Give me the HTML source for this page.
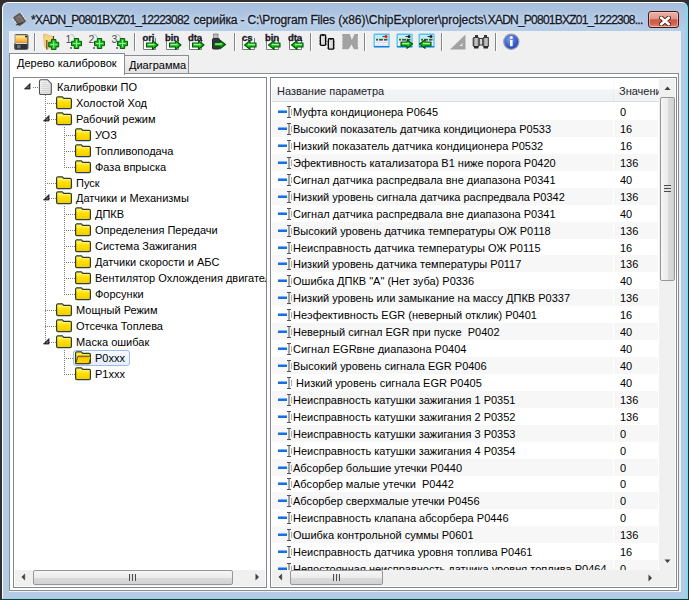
<!DOCTYPE html>
<html><head><meta charset="utf-8"><style>
*{box-sizing:border-box;margin:0;padding:0}
html,body{width:689px;height:600px;overflow:hidden;background:#303030}
body{position:relative;font-family:"Liberation Sans",sans-serif;font-size:11px;color:#000}
.a{position:absolute}
#frame{left:2px;top:2px;width:686px;height:597px;background:linear-gradient(#a6bedc 0px,#b6cde8 28px,#b4cbe6 40px,#b4cbe6 100%);border-radius:6px 6px 0 0;border:1px solid #fff;border-right:2px solid #7fdcf0;border-bottom:1px solid #7fdcf0}
#client{left:9px;top:31px;width:672px;height:561px;background:#f0f0f0}
.tt{top:13px;font-size:12px;color:#141828;-webkit-text-stroke:0.3px #141828;white-space:nowrap;text-shadow:0 0 6px #dfeaf6,0 0 3px #e8f0f8}
#close{left:648px;top:11px;width:31px;height:17px;border:1px solid #4a1812;border-radius:3px;background:linear-gradient(#eab2a8 0%,#e0988a 45%,#cc5a44 52%,#d06450 80%,#e0927c 100%);box-shadow:inset 0 0 0 1px rgba(255,220,210,0.5)}
.sep{top:33px;height:18px;width:2px;background:#84848c;border-right:1px solid #fff}
#tabpage{left:9px;top:73px;width:670px;height:518px;border:1px solid #898c95;background:#fff}
#tab1{left:9px;top:53px;width:116px;height:22px;background:#fff;border:1px solid #898c95;border-bottom:none;z-index:2}
#tab2{left:125px;top:55px;width:64px;height:18px;background:linear-gradient(#f2f2f2,#e4e4e4);border:1px solid #898c95;border-bottom:none;border-left:none}
.tabt{white-space:nowrap}
#tree{left:13px;top:77px;width:254px;height:511px;border:1px solid #828790;background:#fff;overflow:hidden}
#list{left:270px;top:77px;width:407px;height:511px;border:1px solid #828790;background:#fff;overflow:hidden}
.ti{position:absolute;height:16px;line-height:16px;white-space:nowrap}
.dh{height:1px;background-image:linear-gradient(90deg,#808080 50%,transparent 50%);background-size:2px 1px}
.dv{width:1px;background-image:linear-gradient(#808080 50%,transparent 50%);background-size:1px 2px}
.sel{border:1px solid #9dbde6;border-radius:3px;background:linear-gradient(#f5f9fe,#e4eefb)}
.hsb{height:16px;background:#f0f0f0}
.vsb{width:16px;background:#f0f0f0}
.corner{width:16px;height:16px;background:#f0f0f0}
.thumbh{height:15px;border:1px solid #979797;border-radius:2px;background:linear-gradient(#f6f6f6,#ececec 50%,#dcdcdc 51%,#d2d2d2)}
.thumbv{width:15px;border:1px solid #979797;border-radius:2px;background:linear-gradient(90deg,#f6f6f6,#ececec 50%,#dcdcdc 51%,#d2d2d2)}
.grip{position:absolute;left:50%;top:3px;width:7px;height:7px;margin-left:-4px;background:repeating-linear-gradient(90deg,#4a4a4a 0,#4a4a4a 1px,#e0e0e0 1px,#e0e0e0 3px)}
.gripv{position:absolute;top:50%;left:3px;width:7px;height:7px;margin-top:-4px;background:repeating-linear-gradient(#4a4a4a 0,#4a4a4a 1px,#e0e0e0 1px,#e0e0e0 3px)}
.hdr{background:linear-gradient(#ffffff 0%,#ffffff 45%,#f3f4f6 50%,#f1f2f4 100%);border-bottom:1px solid #dcdde0}
.hsep{top:0;width:1px;height:22px;background:linear-gradient(#fff,#e3e5e8)}
.ht{top:5px;white-space:nowrap;color:#1e1e2e}
.row{position:absolute;left:1px;height:17px;width:387px;white-space:nowrap}
.c1{position:absolute;left:0;top:0;width:341px;height:17px}
.c2{position:absolute;left:342px;top:0;width:44px;height:17px}
.g .c1,.g .c2{background:#f7f7f7}
.rt{position:absolute;left:21px;top:3px;line-height:13px}
.rv{position:absolute;left:348px;top:3px;line-height:13px}
</style></head><body>
<svg width="0" height="0" style="position:absolute"><defs><linearGradient id="gOr" x1="0" y1="0" x2="0" y2="1"><stop offset="0" stop-color="#fff4a0"/><stop offset="1" stop-color="#f59a1a"/></linearGradient><radialGradient id="gInfo" cx="0.4" cy="0.35" r="0.7"><stop offset="0" stop-color="#7a9cf0"/><stop offset="1" stop-color="#1a3ab0"/></radialGradient><linearGradient id="gFold" x1="0" y1="0" x2="0" y2="1"><stop offset="0" stop-color="#fff27a"/><stop offset="0.5" stop-color="#ffe000"/><stop offset="1" stop-color="#f5c800"/></linearGradient><linearGradient id="gDoc" x1="0" y1="0" x2="1" y2="1"><stop offset="0" stop-color="#fbfbfb"/><stop offset="1" stop-color="#d8d8d8"/></linearGradient><linearGradient id="gBin" x1="0" y1="0" x2="1" y2="0"><stop offset="0" stop-color="#707070"/><stop offset="0.5" stop-color="#d0d0d0"/><stop offset="1" stop-color="#808080"/></linearGradient></defs></svg>
<div id="frame" class="a"></div>
<svg class="a" style="left:11px;top:11px" width="17" height="17" viewBox="0 0 17 17"><g transform="rotate(-35 8.5 8.5)"><rect x="4" y="3" width="9" height="11" rx="1.5" fill="#5e554e"/><rect x="5.5" y="4.5" width="6" height="8" fill="#746a62"/><path d="M6.5 5.5H10.5V11.5" stroke="#8a8078" stroke-width="0.8" fill="none"/><path d="M2.8 5H4M2.8 8H4M2.8 11H4M13 5H14.2M13 8H14.2M13 11H14.2" stroke="#f0f4fa" stroke-width="1.2"/></g><path d="M5 14 L12 11.5" stroke="#3a3430" stroke-width="1.2"/></svg>
<div class="a tt" style="left:31px;letter-spacing:-0.73px">*XADN_P0801BXZ01_12223082</div><div class="a tt" style="left:193.5px;letter-spacing:-0.16px">серийка - C:\Program Files</div><div class="a tt" style="left:338.2px;letter-spacing:0px">(x86)\ChipExplorer\projects\</div><div class="a tt" style="left:487.7px;letter-spacing:-0.77px">XADN_P0801BXZ01_1222308...</div>
<div id="close" class="a"><svg class="a" style="left:9.5px;top:3.5px" width="12" height="10" viewBox="0 0 12 10"><path d="M2.2 1.8 L9.8 8.2 M9.8 1.8 L2.2 8.2" stroke="#4a1a14" stroke-width="4.4" stroke-linecap="round"/><path d="M2.2 1.8 L9.8 8.2 M9.8 1.8 L2.2 8.2" stroke="#fff" stroke-width="2.8" stroke-linecap="round"/></svg></div>
<div id="client" class="a"></div>
<svg class="a" style="left:12px;top:33px" width="17" height="17" viewBox="0 0 17 17"><rect x="2.5" y="1.5" width="13.5" height="15" rx="1.5" fill="#50565e" stroke="#5a6068" stroke-width="1"/><rect x="2" y="1.5" width="1.6" height="9" fill="#c8c8c8"/><rect x="3.6" y="2.3" width="11.6" height="7.5" fill="url(#gOr)"/><path d="M3.6 10.4H15.2" stroke="#e8eef4" stroke-width="1"/><rect x="3.6" y="11" width="11.6" height="5" fill="#2e3238"/><rect x="5" y="11.8" width="3.5" height="3.5" fill="#6a747c"/><rect x="13.2" y="2.6" width="1.8" height="1.8" fill="#222"/></svg><svg class="a" style="left:43px;top:33px" width="17" height="17" viewBox="0 0 17 17"><path d="M0.5 1.5 Q3 0.5 4.5 2 L9.5 3.5 V13 L4.5 16.5 L1.5 13.5Z" fill="#f3d682" stroke="#e0b860" stroke-width="0.8"/><path d="M3.8 7V16.5M10.5 3V7" stroke="#6a4010" stroke-width="1.2"/><path d="M8.399999999999999 6.6H13.0V9.3H15.7V13.899999999999999H13.0V16.6H8.399999999999999V13.899999999999999H5.699999999999999V9.3H8.399999999999999Z" fill="#1cbc1c" stroke="#0b5a0e" stroke-width="1" stroke-linejoin="round"/><path d="M10.7 8.1V15.100000000000001M7.199999999999999 11.6H14.2" stroke="#8ef08e" stroke-width="1"/></svg><svg class="a" style="left:65px;top:33px" width="17" height="17" viewBox="0 0 17 17"><text x="0.5" y="9.5" font-family="Liberation Sans" font-size="10.5" fill="#4a5058">1</text><path d="M5.5 1.5 Q9 1.5 9.5 5.5" fill="none" stroke="#c0c0c0" stroke-width="1.2"/><circle cx="6" cy="15" r="1" fill="#605060"/><path d="M9.3 5.5H13.7V8.3H16.5V12.7H13.7V15.5H9.3V12.7H6.5V8.3H9.3Z" fill="#1cbc1c" stroke="#0b5a0e" stroke-width="1" stroke-linejoin="round"/><path d="M11.5 7.0V14.0M8.0 10.5H15.0" stroke="#8ef08e" stroke-width="1"/></svg><svg class="a" style="left:88px;top:33px" width="17" height="17" viewBox="0 0 17 17"><text x="0.5" y="9.5" font-family="Liberation Sans" font-size="10.5" fill="#4a5058">2</text><path d="M5.5 1.5 Q9 1.5 9.5 5.5" fill="none" stroke="#c0c0c0" stroke-width="1.2"/><circle cx="6" cy="15" r="1" fill="#605060"/><path d="M9.3 5.5H13.7V8.3H16.5V12.7H13.7V15.5H9.3V12.7H6.5V8.3H9.3Z" fill="#1cbc1c" stroke="#0b5a0e" stroke-width="1" stroke-linejoin="round"/><path d="M11.5 7.0V14.0M8.0 10.5H15.0" stroke="#8ef08e" stroke-width="1"/></svg><svg class="a" style="left:111px;top:33px" width="17" height="17" viewBox="0 0 17 17"><text x="0.5" y="9.5" font-family="Liberation Sans" font-size="10.5" fill="#4a5058">3</text><path d="M5.5 1.5 Q9 1.5 9.5 5.5" fill="none" stroke="#c0c0c0" stroke-width="1.2"/><circle cx="6" cy="15" r="1" fill="#605060"/><path d="M9.3 5.5H13.7V8.3H16.5V12.7H13.7V15.5H9.3V12.7H6.5V8.3H9.3Z" fill="#1cbc1c" stroke="#0b5a0e" stroke-width="1" stroke-linejoin="round"/><path d="M11.5 7.0V14.0M8.0 10.5H15.0" stroke="#8ef08e" stroke-width="1"/></svg><svg class="a" style="left:142px;top:33px" width="17" height="17" viewBox="0 0 17 17"><path d="M1.5 5V16.5H13.5V5" fill="#fff" stroke="#787878" stroke-width="1"/><text x="0.5" y="7.6" font-family="Liberation Sans" font-weight="bold" font-size="9.5" fill="#201828" stroke="#201828" stroke-width="0.35" letter-spacing="-0.1">ori</text><path d="M4.5 10.0H10.5V7.7L16 12.0L10.5 16.3V14.0H4.5Z" fill="#12c812" stroke="#08500a" stroke-width="1.1" stroke-linejoin="round"/><path d="M5.6 11.5H12.5" stroke="#a8f5a8" stroke-width="1.3"/></svg><svg class="a" style="left:165px;top:33px" width="17" height="17" viewBox="0 0 17 17"><path d="M1.5 5V16.5H13.5V5" fill="#fff" stroke="#787878" stroke-width="1"/><text x="0" y="7.6" font-family="Liberation Sans" font-weight="bold" font-size="9.5" fill="#201828" stroke="#201828" stroke-width="0.35" letter-spacing="-0.1">bin</text><path d="M4.5 10.0H10.5V7.7L16 12.0L10.5 16.3V14.0H4.5Z" fill="#12c812" stroke="#08500a" stroke-width="1.1" stroke-linejoin="round"/><path d="M5.6 11.5H12.5" stroke="#a8f5a8" stroke-width="1.3"/></svg><svg class="a" style="left:188px;top:33px" width="17" height="17" viewBox="0 0 17 17"><path d="M1.5 5V16.5H13.5V5" fill="#fff" stroke="#787878" stroke-width="1"/><text x="0" y="7.6" font-family="Liberation Sans" font-weight="bold" font-size="9.5" fill="#201828" stroke="#201828" stroke-width="0.35" letter-spacing="-0.1">dta</text><path d="M4.5 10.0H10.5V7.7L16 12.0L10.5 16.3V14.0H4.5Z" fill="#12c812" stroke="#08500a" stroke-width="1.1" stroke-linejoin="round"/><path d="M5.6 11.5H12.5" stroke="#a8f5a8" stroke-width="1.3"/></svg><svg class="a" style="left:211px;top:33px" width="17" height="17" viewBox="0 0 17 17"><rect x="2.5" y="1" width="4.5" height="5" fill="#b8bcbc" stroke="#7a7e80" stroke-width="0.8"/><rect x="1.5" y="5.5" width="7" height="10.5" rx="1" fill="#3a3040" stroke="#2a2030"/><path d="M3.0 9.5H9.0V7.2L14.5 11.5L9.0 15.8V13.5H3.0Z" fill="#139a13" stroke="#08500a" stroke-width="1.1" stroke-linejoin="round"/><path d="M4.1 11H11.0" stroke="#a8f5a8" stroke-width="1.3"/></svg><svg class="a" style="left:241px;top:33px" width="17" height="17" viewBox="0 0 17 17"><path d="M1.5 5V16.5H13.5V5" fill="#fff" stroke="#787878" stroke-width="1"/><text x="1" y="7.6" font-family="Liberation Sans" font-weight="bold" font-size="9.5" fill="#201828" stroke="#201828" stroke-width="0.35" letter-spacing="-0.1">cs</text><path d="M15.0 10.0H9.0V7.7L3.5 12.0L9.0 16.3V14.0H15.0Z" fill="#12c812" stroke="#08500a" stroke-width="1.1" stroke-linejoin="round"/><path d="M13.9 11.5H7.0" stroke="#a8f5a8" stroke-width="1.3"/></svg><svg class="a" style="left:265px;top:33px" width="17" height="17" viewBox="0 0 17 17"><path d="M1.5 5V16.5H13.5V5" fill="#fff" stroke="#787878" stroke-width="1"/><text x="0" y="7.6" font-family="Liberation Sans" font-weight="bold" font-size="9.5" fill="#201828" stroke="#201828" stroke-width="0.35" letter-spacing="-0.1">bin</text><path d="M15.0 10.0H9.0V7.7L3.5 12.0L9.0 16.3V14.0H15.0Z" fill="#12c812" stroke="#08500a" stroke-width="1.1" stroke-linejoin="round"/><path d="M13.9 11.5H7.0" stroke="#a8f5a8" stroke-width="1.3"/></svg><svg class="a" style="left:288px;top:33px" width="17" height="17" viewBox="0 0 17 17"><path d="M1.5 5V16.5H13.5V5" fill="#fff" stroke="#787878" stroke-width="1"/><text x="0" y="7.6" font-family="Liberation Sans" font-weight="bold" font-size="9.5" fill="#201828" stroke="#201828" stroke-width="0.35" letter-spacing="-0.1">dta</text><path d="M15.0 10.0H9.0V7.7L3.5 12.0L9.0 16.3V14.0H15.0Z" fill="#12c812" stroke="#08500a" stroke-width="1.1" stroke-linejoin="round"/><path d="M13.9 11.5H7.0" stroke="#a8f5a8" stroke-width="1.3"/></svg><svg class="a" style="left:319px;top:33px" width="17" height="17" viewBox="0 0 17 17"><rect x="1.4" y="1.8" width="5.2" height="10.6" rx="0.8" fill="#d8d8d8" stroke="#0a0a0a" stroke-width="1.3"/><path d="M3 1.6 Q4 3.2 5 1.6" stroke="#0a0a0a" stroke-width="1.3" fill="#0a0a0a"/><rect x="9.4" y="5.6" width="5.2" height="10.6" rx="0.8" fill="#d8d8d8" stroke="#0a0a0a" stroke-width="1.3"/><path d="M11 5.4 Q12 7 13 5.4" stroke="#0a0a0a" stroke-width="1.3" fill="#0a0a0a"/><path d="M3 4.5V10M11 8.5V14" stroke="#f4f4f4" stroke-width="1"/><path d="M0 5H0.8M0 8H0.8M0 11H0.8M7.2 5H8M7.2 8H8M7.2 11H8M8 9H8.8M8 12H8.8M8 15H8.8M15.2 9H16M15.2 12H16M15.2 15H16" stroke="#333" stroke-width="0.9"/></svg><svg class="a" style="left:342px;top:33px" width="17" height="17" viewBox="0 0 17 17"><path d="M0.2 1H7.8L9.8 7L12.5 1H16V16.3H11.8L9.6 11.5L6.5 16.3H0.2Z" fill="#a2a2a2"/><path d="M-0.5 4H0.8M-0.5 7H0.8M-0.5 10H0.8M-0.5 13H0.8M15.4 4H16.6M15.4 7H16.6M15.4 10H16.6M15.4 13H16.6" stroke="#efefef" stroke-width="1"/></svg><svg class="a" style="left:373px;top:33px" width="17" height="17" viewBox="0 0 17 17"><rect x="1.2" y="1.2" width="14.8" height="12.8" rx="0.5" fill="#f2fbff" stroke="#52c6f0" stroke-width="1.4"/><path d="M1 13.6H16.2" stroke="#1a78e0" stroke-width="1.2"/><rect x="2" y="2" width="13.2" height="3.5" fill="#c6ecf8"/><path d="M9.5 3.5H12" stroke="#304050" stroke-width="1"/><circle cx="13" cy="3.4" r="1.5" fill="#f0101a"/><path d="M2.5 5.8H15" stroke="#86dca8" stroke-width="1"/><path d="M3 6.8H5M6 6.8H10M11 6.8H14.5" stroke="#201828" stroke-width="1.3"/><path d="M2.5 9.5H15M2.5 12H15" stroke="#e4d4ec" stroke-width="1"/><path d="M5.5 7.5V13M10.5 7.5V13" stroke="#dce8f0" stroke-width="1"/></svg><svg class="a" style="left:396px;top:33px" width="17" height="17" viewBox="0 0 17 17"><rect x="1.2" y="1.2" width="14.8" height="12.8" rx="0.5" fill="#f2fbff" stroke="#52c6f0" stroke-width="1.4"/><path d="M1 13.6H16.2" stroke="#1a78e0" stroke-width="1.2"/><rect x="2" y="2" width="13.2" height="3.5" fill="#c6ecf8"/><path d="M9.5 3.5H12" stroke="#304050" stroke-width="1"/><circle cx="13" cy="3.4" r="1.5" fill="#202020"/><path d="M2.5 5.8H15" stroke="#86dca8" stroke-width="1"/><path d="M3 6.8H5M6 6.8H10M11 6.8H14.5" stroke="#201828" stroke-width="1.3"/><path d="M2.5 9.5H15M2.5 12H15" stroke="#e4d4ec" stroke-width="1"/><path d="M5.5 7.5V13M10.5 7.5V13" stroke="#dce8f0" stroke-width="1"/><path d="M5.0 9.0H11.0V6.7L16.5 11.0L11.0 15.3V13.0H5.0Z" fill="#12c812" stroke="#08500a" stroke-width="1.1" stroke-linejoin="round"/><path d="M6.1 10.5H13.0" stroke="#a8f5a8" stroke-width="1.3"/></svg><svg class="a" style="left:418px;top:33px" width="17" height="17" viewBox="0 0 17 17"><rect x="1.2" y="1.2" width="14.8" height="12.8" rx="0.5" fill="#f2fbff" stroke="#52c6f0" stroke-width="1.4"/><path d="M1 13.6H16.2" stroke="#1a78e0" stroke-width="1.2"/><rect x="2" y="2" width="13.2" height="3.5" fill="#c6ecf8"/><path d="M9.5 3.5H12" stroke="#304050" stroke-width="1"/><circle cx="13" cy="3.4" r="1.5" fill="#202020"/><path d="M2.5 5.8H15" stroke="#86dca8" stroke-width="1"/><path d="M3 6.8H5M6 6.8H10M11 6.8H14.5" stroke="#201828" stroke-width="1.3"/><path d="M2.5 9.5H15M2.5 12H15" stroke="#e4d4ec" stroke-width="1"/><path d="M5.5 7.5V13M10.5 7.5V13" stroke="#dce8f0" stroke-width="1"/><path d="M13.0 9.0H7.0V6.7L1.5 11.0L7.0 15.3V13.0H13.0Z" fill="#12c812" stroke="#08500a" stroke-width="1.1" stroke-linejoin="round"/><path d="M11.9 10.5H5.0" stroke="#a8f5a8" stroke-width="1.3"/></svg><svg class="a" style="left:449px;top:33px" width="17" height="17" viewBox="0 0 17 17"><path d="M16.5 1.5V16.5H1Z" fill="#a2a2a2"/><path d="M11 12.5H13V10.5" stroke="#f0f0f0" stroke-width="1" fill="none"/></svg><svg class="a" style="left:472px;top:33px" width="17" height="17" viewBox="0 0 17 17"><rect x="7" y="5.5" width="4" height="6.5" fill="#d4d4d4" stroke="#3a3a3a" stroke-width="1"/><rect x="1.2" y="4.5" width="5.8" height="9" rx="0.8" fill="url(#gBin)" stroke="#2e2e2e" stroke-width="1"/><rect x="11" y="4.5" width="5.8" height="9" rx="0.8" fill="url(#gBin)" stroke="#2e2e2e" stroke-width="1"/><rect x="3" y="2" width="3" height="2.5" fill="#3a3a3a"/><rect x="12" y="2" width="3" height="2.5" fill="#3a3a3a"/><rect x="2" y="13" width="4.5" height="2.5" fill="#2a2a2a"/><rect x="11.5" y="13" width="4.5" height="2.5" fill="#2a2a2a"/></svg><svg class="a" style="left:503px;top:33px" width="17" height="17" viewBox="0 0 17 17"><circle cx="8.3" cy="8.7" r="7.6" fill="url(#gInfo)" stroke="#9aa0b0" stroke-width="1.2"/><circle cx="8.3" cy="4.6" r="1.5" fill="#fff"/><path d="M7 7H9.6V13.2H7Z" fill="#fff"/></svg><div class="a sep" style="left:34px"></div><div class="a sep" style="left:134px"></div><div class="a sep" style="left:234px"></div><div class="a sep" style="left:310px"></div><div class="a sep" style="left:364px"></div><div class="a sep" style="left:441px"></div><div class="a sep" style="left:495px"></div>
<div id="tabpage" class="a"></div>
<div id="tab2" class="a"><span class="a tabt" style="left:4px;top:3px">Диаграмма</span></div>
<div id="tab1" class="a"><span class="a tabt" style="left:7px;top:3px">Дерево калибровок</span></div>
<div id="tree" class="a">
<div class="a dv" style="left:31px;top:17px;height:248px"></div><div class="a dv" style="left:50px;top:49px;height:41px"></div><div class="a dv" style="left:50px;top:128px;height:89px"></div><div class="a dv" style="left:50px;top:272px;height:25px"></div><div class="a dh" style="left:19px;top:9px;width:5px"></div><svg class="a" style="left:10px;top:5px" width="7" height="7" viewBox="0 0 7 7"><path d="M6 0.5 V6 H0.5Z" fill="#262626" stroke="#262626" stroke-width="0.8" stroke-linejoin="round"/><path d="M4.8 3 V4.8 H3" stroke="#8a8a8a" stroke-width="0.8" fill="none"/></svg><svg class="a" style="left:23.5px;top:1px" width="16" height="16" viewBox="0 0 16 16"><path d="M1.5 2.3 Q1.5 0.7 3 0.7 H9.5 L13.3 4.6 V14 Q13.3 15.6 11.8 15.6 H3 Q1.5 15.6 1.5 14Z" fill="url(#gDoc)" stroke="#505050" stroke-width="1.1"/><path d="M3.5 3.5H8.5M3.5 5.5H11M3.5 7.5H11M3.5 9.5H11M3.5 11.5H11M3.5 13.5H10" stroke="#d2d2d2" stroke-width="0.9"/></svg><div class="ti" style="left:43px;top:1px">Калибровки ПО</div><div class="a dh" style="left:31px;top:25px;width:11px"></div><svg class="a" style="left:42px;top:18px" width="16" height="15" viewBox="0 0 16 15"><path d="M0.6 2.3 Q0.6 0.8 2 0.8 H6.3 L7.8 2.4 H14 Q15.4 2.4 15.4 3.8 V11.2 Q15.4 12.6 14 12.6 H2 Q0.6 12.6 0.6 11.2Z" fill="url(#gFold)" stroke="#2e3a18" stroke-width="1.2"/><path d="M1.6 3.6H14.4" stroke="#fff38a" stroke-width="0.8"/><path d="M1.4 12.4H14.6" stroke="#2456a8" stroke-width="0.8" opacity="0.55"/></svg><div class="ti" style="left:62px;top:17px">Холостой Ход</div><div class="a dh" style="left:31px;top:41px;width:11px"></div><svg class="a" style="left:29px;top:37px" width="7" height="7" viewBox="0 0 7 7"><path d="M6 0.5 V6 H0.5Z" fill="#262626" stroke="#262626" stroke-width="0.8" stroke-linejoin="round"/><path d="M4.8 3 V4.8 H3" stroke="#8a8a8a" stroke-width="0.8" fill="none"/></svg><svg class="a" style="left:42px;top:34px" width="16" height="15" viewBox="0 0 16 15"><path d="M0.6 2.3 Q0.6 0.8 2 0.8 H6.3 L7.8 2.4 H14 Q15.4 2.4 15.4 3.8 V11.2 Q15.4 12.6 14 12.6 H2 Q0.6 12.6 0.6 11.2Z" fill="url(#gFold)" stroke="#2e3a18" stroke-width="1.2"/><path d="M1.6 3.6H14.4" stroke="#fff38a" stroke-width="0.8"/><path d="M1.4 12.4H14.6" stroke="#2456a8" stroke-width="0.8" opacity="0.55"/></svg><div class="ti" style="left:62px;top:33px">Рабочий режим</div><div class="a dh" style="left:50px;top:57px;width:11px"></div><svg class="a" style="left:61px;top:50px" width="16" height="15" viewBox="0 0 16 15"><path d="M0.6 2.3 Q0.6 0.8 2 0.8 H6.3 L7.8 2.4 H14 Q15.4 2.4 15.4 3.8 V11.2 Q15.4 12.6 14 12.6 H2 Q0.6 12.6 0.6 11.2Z" fill="url(#gFold)" stroke="#2e3a18" stroke-width="1.2"/><path d="M1.6 3.6H14.4" stroke="#fff38a" stroke-width="0.8"/><path d="M1.4 12.4H14.6" stroke="#2456a8" stroke-width="0.8" opacity="0.55"/></svg><div class="ti" style="left:81px;top:49px">УОЗ</div><div class="a dh" style="left:50px;top:73px;width:11px"></div><svg class="a" style="left:61px;top:66px" width="16" height="15" viewBox="0 0 16 15"><path d="M0.6 2.3 Q0.6 0.8 2 0.8 H6.3 L7.8 2.4 H14 Q15.4 2.4 15.4 3.8 V11.2 Q15.4 12.6 14 12.6 H2 Q0.6 12.6 0.6 11.2Z" fill="url(#gFold)" stroke="#2e3a18" stroke-width="1.2"/><path d="M1.6 3.6H14.4" stroke="#fff38a" stroke-width="0.8"/><path d="M1.4 12.4H14.6" stroke="#2456a8" stroke-width="0.8" opacity="0.55"/></svg><div class="ti" style="left:81px;top:65px">Топливоподача</div><div class="a dh" style="left:50px;top:89px;width:11px"></div><svg class="a" style="left:61px;top:82px" width="16" height="15" viewBox="0 0 16 15"><path d="M0.6 2.3 Q0.6 0.8 2 0.8 H6.3 L7.8 2.4 H14 Q15.4 2.4 15.4 3.8 V11.2 Q15.4 12.6 14 12.6 H2 Q0.6 12.6 0.6 11.2Z" fill="url(#gFold)" stroke="#2e3a18" stroke-width="1.2"/><path d="M1.6 3.6H14.4" stroke="#fff38a" stroke-width="0.8"/><path d="M1.4 12.4H14.6" stroke="#2456a8" stroke-width="0.8" opacity="0.55"/></svg><div class="ti" style="left:81px;top:81px">Фаза впрыска</div><div class="a dh" style="left:31px;top:105px;width:11px"></div><svg class="a" style="left:42px;top:98px" width="16" height="15" viewBox="0 0 16 15"><path d="M0.6 2.3 Q0.6 0.8 2 0.8 H6.3 L7.8 2.4 H14 Q15.4 2.4 15.4 3.8 V11.2 Q15.4 12.6 14 12.6 H2 Q0.6 12.6 0.6 11.2Z" fill="url(#gFold)" stroke="#2e3a18" stroke-width="1.2"/><path d="M1.6 3.6H14.4" stroke="#fff38a" stroke-width="0.8"/><path d="M1.4 12.4H14.6" stroke="#2456a8" stroke-width="0.8" opacity="0.55"/></svg><div class="ti" style="left:62px;top:97px">Пуск</div><div class="a dh" style="left:31px;top:120px;width:11px"></div><svg class="a" style="left:29px;top:116px" width="7" height="7" viewBox="0 0 7 7"><path d="M6 0.5 V6 H0.5Z" fill="#262626" stroke="#262626" stroke-width="0.8" stroke-linejoin="round"/><path d="M4.8 3 V4.8 H3" stroke="#8a8a8a" stroke-width="0.8" fill="none"/></svg><svg class="a" style="left:42px;top:113px" width="16" height="15" viewBox="0 0 16 15"><path d="M0.6 2.3 Q0.6 0.8 2 0.8 H6.3 L7.8 2.4 H14 Q15.4 2.4 15.4 3.8 V11.2 Q15.4 12.6 14 12.6 H2 Q0.6 12.6 0.6 11.2Z" fill="url(#gFold)" stroke="#2e3a18" stroke-width="1.2"/><path d="M1.6 3.6H14.4" stroke="#fff38a" stroke-width="0.8"/><path d="M1.4 12.4H14.6" stroke="#2456a8" stroke-width="0.8" opacity="0.55"/></svg><div class="ti" style="left:62px;top:112px">Датчики и Механизмы</div><div class="a dh" style="left:50px;top:136px;width:11px"></div><svg class="a" style="left:61px;top:129px" width="16" height="15" viewBox="0 0 16 15"><path d="M0.6 2.3 Q0.6 0.8 2 0.8 H6.3 L7.8 2.4 H14 Q15.4 2.4 15.4 3.8 V11.2 Q15.4 12.6 14 12.6 H2 Q0.6 12.6 0.6 11.2Z" fill="url(#gFold)" stroke="#2e3a18" stroke-width="1.2"/><path d="M1.6 3.6H14.4" stroke="#fff38a" stroke-width="0.8"/><path d="M1.4 12.4H14.6" stroke="#2456a8" stroke-width="0.8" opacity="0.55"/></svg><div class="ti" style="left:81px;top:128px">ДПКВ</div><div class="a dh" style="left:50px;top:152px;width:11px"></div><svg class="a" style="left:61px;top:145px" width="16" height="15" viewBox="0 0 16 15"><path d="M0.6 2.3 Q0.6 0.8 2 0.8 H6.3 L7.8 2.4 H14 Q15.4 2.4 15.4 3.8 V11.2 Q15.4 12.6 14 12.6 H2 Q0.6 12.6 0.6 11.2Z" fill="url(#gFold)" stroke="#2e3a18" stroke-width="1.2"/><path d="M1.6 3.6H14.4" stroke="#fff38a" stroke-width="0.8"/><path d="M1.4 12.4H14.6" stroke="#2456a8" stroke-width="0.8" opacity="0.55"/></svg><div class="ti" style="left:81px;top:144px">Определения Передачи</div><div class="a dh" style="left:50px;top:168px;width:11px"></div><svg class="a" style="left:61px;top:161px" width="16" height="15" viewBox="0 0 16 15"><path d="M0.6 2.3 Q0.6 0.8 2 0.8 H6.3 L7.8 2.4 H14 Q15.4 2.4 15.4 3.8 V11.2 Q15.4 12.6 14 12.6 H2 Q0.6 12.6 0.6 11.2Z" fill="url(#gFold)" stroke="#2e3a18" stroke-width="1.2"/><path d="M1.6 3.6H14.4" stroke="#fff38a" stroke-width="0.8"/><path d="M1.4 12.4H14.6" stroke="#2456a8" stroke-width="0.8" opacity="0.55"/></svg><div class="ti" style="left:81px;top:160px">Система Зажигания</div><div class="a dh" style="left:50px;top:184px;width:11px"></div><svg class="a" style="left:61px;top:177px" width="16" height="15" viewBox="0 0 16 15"><path d="M0.6 2.3 Q0.6 0.8 2 0.8 H6.3 L7.8 2.4 H14 Q15.4 2.4 15.4 3.8 V11.2 Q15.4 12.6 14 12.6 H2 Q0.6 12.6 0.6 11.2Z" fill="url(#gFold)" stroke="#2e3a18" stroke-width="1.2"/><path d="M1.6 3.6H14.4" stroke="#fff38a" stroke-width="0.8"/><path d="M1.4 12.4H14.6" stroke="#2456a8" stroke-width="0.8" opacity="0.55"/></svg><div class="ti" style="left:81px;top:176px">Датчики скорости и АБС</div><div class="a dh" style="left:50px;top:200px;width:11px"></div><svg class="a" style="left:61px;top:193px" width="16" height="15" viewBox="0 0 16 15"><path d="M0.6 2.3 Q0.6 0.8 2 0.8 H6.3 L7.8 2.4 H14 Q15.4 2.4 15.4 3.8 V11.2 Q15.4 12.6 14 12.6 H2 Q0.6 12.6 0.6 11.2Z" fill="url(#gFold)" stroke="#2e3a18" stroke-width="1.2"/><path d="M1.6 3.6H14.4" stroke="#fff38a" stroke-width="0.8"/><path d="M1.4 12.4H14.6" stroke="#2456a8" stroke-width="0.8" opacity="0.55"/></svg><div class="ti" style="left:81px;top:192px">Вентилятор Охлождения двигателя</div><div class="a dh" style="left:50px;top:216px;width:11px"></div><svg class="a" style="left:61px;top:209px" width="16" height="15" viewBox="0 0 16 15"><path d="M0.6 2.3 Q0.6 0.8 2 0.8 H6.3 L7.8 2.4 H14 Q15.4 2.4 15.4 3.8 V11.2 Q15.4 12.6 14 12.6 H2 Q0.6 12.6 0.6 11.2Z" fill="url(#gFold)" stroke="#2e3a18" stroke-width="1.2"/><path d="M1.6 3.6H14.4" stroke="#fff38a" stroke-width="0.8"/><path d="M1.4 12.4H14.6" stroke="#2456a8" stroke-width="0.8" opacity="0.55"/></svg><div class="ti" style="left:81px;top:208px">Форсунки</div><div class="a dh" style="left:31px;top:232px;width:11px"></div><svg class="a" style="left:42px;top:225px" width="16" height="15" viewBox="0 0 16 15"><path d="M0.6 2.3 Q0.6 0.8 2 0.8 H6.3 L7.8 2.4 H14 Q15.4 2.4 15.4 3.8 V11.2 Q15.4 12.6 14 12.6 H2 Q0.6 12.6 0.6 11.2Z" fill="url(#gFold)" stroke="#2e3a18" stroke-width="1.2"/><path d="M1.6 3.6H14.4" stroke="#fff38a" stroke-width="0.8"/><path d="M1.4 12.4H14.6" stroke="#2456a8" stroke-width="0.8" opacity="0.55"/></svg><div class="ti" style="left:62px;top:224px">Мощный Режим</div><div class="a dh" style="left:31px;top:248px;width:11px"></div><svg class="a" style="left:42px;top:241px" width="16" height="15" viewBox="0 0 16 15"><path d="M0.6 2.3 Q0.6 0.8 2 0.8 H6.3 L7.8 2.4 H14 Q15.4 2.4 15.4 3.8 V11.2 Q15.4 12.6 14 12.6 H2 Q0.6 12.6 0.6 11.2Z" fill="url(#gFold)" stroke="#2e3a18" stroke-width="1.2"/><path d="M1.6 3.6H14.4" stroke="#fff38a" stroke-width="0.8"/><path d="M1.4 12.4H14.6" stroke="#2456a8" stroke-width="0.8" opacity="0.55"/></svg><div class="ti" style="left:62px;top:240px">Отсечка Топлева</div><div class="a dh" style="left:31px;top:264px;width:11px"></div><svg class="a" style="left:29px;top:260px" width="7" height="7" viewBox="0 0 7 7"><path d="M6 0.5 V6 H0.5Z" fill="#262626" stroke="#262626" stroke-width="0.8" stroke-linejoin="round"/><path d="M4.8 3 V4.8 H3" stroke="#8a8a8a" stroke-width="0.8" fill="none"/></svg><svg class="a" style="left:42px;top:257px" width="16" height="15" viewBox="0 0 16 15"><path d="M0.6 2.3 Q0.6 0.8 2 0.8 H6.3 L7.8 2.4 H14 Q15.4 2.4 15.4 3.8 V11.2 Q15.4 12.6 14 12.6 H2 Q0.6 12.6 0.6 11.2Z" fill="url(#gFold)" stroke="#2e3a18" stroke-width="1.2"/><path d="M1.6 3.6H14.4" stroke="#fff38a" stroke-width="0.8"/><path d="M1.4 12.4H14.6" stroke="#2456a8" stroke-width="0.8" opacity="0.55"/></svg><div class="ti" style="left:62px;top:256px">Маска ошибак</div><div class="a dh" style="left:50px;top:280px;width:11px"></div><div class="a sel" style="left:59px;top:272px;width:57px;height:16px"></div><svg class="a" style="left:61px;top:273px" width="16" height="15" viewBox="0 0 16 15"><path d="M0.6 2.3 Q0.6 0.8 2 0.8 H6.3 L7.8 2.4 H14 Q15.4 2.4 15.4 3.8 V11.2 Q15.4 12.6 14 12.6 H2 Q0.6 12.6 0.6 11.2Z" fill="url(#gFold)" stroke="#2e3a18" stroke-width="1.2"/><path d="M3 5.2 H16 L14 12.6 H0.6Z" fill="#ffd000" stroke="#3a3a18" stroke-width="0.9"/><path d="M4 6.5H14" stroke="#f0a040" stroke-width="0.8"/></svg><div class="ti" style="left:81px;top:272px">P0xxx</div><div class="a dh" style="left:50px;top:296px;width:11px"></div><svg class="a" style="left:61px;top:289px" width="16" height="15" viewBox="0 0 16 15"><path d="M0.6 2.3 Q0.6 0.8 2 0.8 H6.3 L7.8 2.4 H14 Q15.4 2.4 15.4 3.8 V11.2 Q15.4 12.6 14 12.6 H2 Q0.6 12.6 0.6 11.2Z" fill="url(#gFold)" stroke="#2e3a18" stroke-width="1.2"/><path d="M1.6 3.6H14.4" stroke="#fff38a" stroke-width="0.8"/><path d="M1.4 12.4H14.6" stroke="#2456a8" stroke-width="0.8" opacity="0.55"/></svg><div class="ti" style="left:81px;top:288px">P1xxx</div>
<div class="a hsb" style="left:1px;top:492px;width:250px"></div><svg class="a" style="left:7px;top:495px" width="5" height="8" viewBox="0 0 5 8"><path d="M4 0.5V7.5L0.5 4Z" fill="#404040"/><path d="M4 2V6" stroke="#9a9a9a" stroke-width="0.6"/></svg><div class="a thumbh" style="left:19px;top:492px;width:200px"><div class="grip"></div></div><svg class="a" style="left:241px;top:495px" width="5" height="8" viewBox="0 0 5 8"><path d="M0.5 0.5V7.5L4 4Z" fill="#404040"/><path d="M0.5 2V6" stroke="#9a9a9a" stroke-width="0.6"/></svg>
</div>
<div id="list" class="a">
<div class="row" style="top:25.00px"><div class="c1"></div><div class="c2"></div><svg class="a" style="left:6px;top:3px" width="14" height="12" viewBox="0 0 14 12"><rect x="0" y="4" width="9" height="3" fill="#1a6ee0"/><rect x="0" y="4" width="9" height="1" fill="#7ab4f5"/><path d="M9 0.5H13M9 11.5H13M11 0.5V11.5" stroke="#505050" stroke-width="1" fill="none"/><path d="M13.5 3V9" stroke="#9a9a9a" stroke-width="0.8"/></svg><div class="rt">Муфта кондиционера P0645</div><div class="rv">0</div></div><div class="row g" style="top:42.00px"><div class="c1"></div><div class="c2"></div><svg class="a" style="left:6px;top:3px" width="14" height="12" viewBox="0 0 14 12"><rect x="0" y="4" width="9" height="3" fill="#1a6ee0"/><rect x="0" y="4" width="9" height="1" fill="#7ab4f5"/><path d="M9 0.5H13M9 11.5H13M11 0.5V11.5" stroke="#505050" stroke-width="1" fill="none"/><path d="M13.5 3V9" stroke="#9a9a9a" stroke-width="0.8"/></svg><div class="rt">Высокий показатель датчика кондиционера P0533</div><div class="rv">16</div></div><div class="row" style="top:59.00px"><div class="c1"></div><div class="c2"></div><svg class="a" style="left:6px;top:3px" width="14" height="12" viewBox="0 0 14 12"><rect x="0" y="4" width="9" height="3" fill="#1a6ee0"/><rect x="0" y="4" width="9" height="1" fill="#7ab4f5"/><path d="M9 0.5H13M9 11.5H13M11 0.5V11.5" stroke="#505050" stroke-width="1" fill="none"/><path d="M13.5 3V9" stroke="#9a9a9a" stroke-width="0.8"/></svg><div class="rt">Низкий показатель датчика кондиционера P0532</div><div class="rv">16</div></div><div class="row g" style="top:76.00px"><div class="c1"></div><div class="c2"></div><svg class="a" style="left:6px;top:3px" width="14" height="12" viewBox="0 0 14 12"><rect x="0" y="4" width="9" height="3" fill="#1a6ee0"/><rect x="0" y="4" width="9" height="1" fill="#7ab4f5"/><path d="M9 0.5H13M9 11.5H13M11 0.5V11.5" stroke="#505050" stroke-width="1" fill="none"/><path d="M13.5 3V9" stroke="#9a9a9a" stroke-width="0.8"/></svg><div class="rt">Эфективность катализатора B1 ниже порога P0420</div><div class="rv">136</div></div><div class="row" style="top:93.00px"><div class="c1"></div><div class="c2"></div><svg class="a" style="left:6px;top:3px" width="14" height="12" viewBox="0 0 14 12"><rect x="0" y="4" width="9" height="3" fill="#1a6ee0"/><rect x="0" y="4" width="9" height="1" fill="#7ab4f5"/><path d="M9 0.5H13M9 11.5H13M11 0.5V11.5" stroke="#505050" stroke-width="1" fill="none"/><path d="M13.5 3V9" stroke="#9a9a9a" stroke-width="0.8"/></svg><div class="rt">Сигнал датчика распредвала вне диапазона P0341</div><div class="rv">40</div></div><div class="row g" style="top:110.00px"><div class="c1"></div><div class="c2"></div><svg class="a" style="left:6px;top:3px" width="14" height="12" viewBox="0 0 14 12"><rect x="0" y="4" width="9" height="3" fill="#1a6ee0"/><rect x="0" y="4" width="9" height="1" fill="#7ab4f5"/><path d="M9 0.5H13M9 11.5H13M11 0.5V11.5" stroke="#505050" stroke-width="1" fill="none"/><path d="M13.5 3V9" stroke="#9a9a9a" stroke-width="0.8"/></svg><div class="rt">Низкий уровень сигнала датчика распредвала P0342</div><div class="rv">136</div></div><div class="row" style="top:127.00px"><div class="c1"></div><div class="c2"></div><svg class="a" style="left:6px;top:3px" width="14" height="12" viewBox="0 0 14 12"><rect x="0" y="4" width="9" height="3" fill="#1a6ee0"/><rect x="0" y="4" width="9" height="1" fill="#7ab4f5"/><path d="M9 0.5H13M9 11.5H13M11 0.5V11.5" stroke="#505050" stroke-width="1" fill="none"/><path d="M13.5 3V9" stroke="#9a9a9a" stroke-width="0.8"/></svg><div class="rt">Сигнал датчика распредвала вне диапазона P0341</div><div class="rv">40</div></div><div class="row g" style="top:144.00px"><div class="c1"></div><div class="c2"></div><svg class="a" style="left:6px;top:3px" width="14" height="12" viewBox="0 0 14 12"><rect x="0" y="4" width="9" height="3" fill="#1a6ee0"/><rect x="0" y="4" width="9" height="1" fill="#7ab4f5"/><path d="M9 0.5H13M9 11.5H13M11 0.5V11.5" stroke="#505050" stroke-width="1" fill="none"/><path d="M13.5 3V9" stroke="#9a9a9a" stroke-width="0.8"/></svg><div class="rt">Высокий уровень датчика температуры ОЖ P0118</div><div class="rv">136</div></div><div class="row" style="top:161.00px"><div class="c1"></div><div class="c2"></div><svg class="a" style="left:6px;top:3px" width="14" height="12" viewBox="0 0 14 12"><rect x="0" y="4" width="9" height="3" fill="#1a6ee0"/><rect x="0" y="4" width="9" height="1" fill="#7ab4f5"/><path d="M9 0.5H13M9 11.5H13M11 0.5V11.5" stroke="#505050" stroke-width="1" fill="none"/><path d="M13.5 3V9" stroke="#9a9a9a" stroke-width="0.8"/></svg><div class="rt">Неисправность датчика температуры ОЖ P0115</div><div class="rv">16</div></div><div class="row g" style="top:177.00px"><div class="c1"></div><div class="c2"></div><svg class="a" style="left:6px;top:3px" width="14" height="12" viewBox="0 0 14 12"><rect x="0" y="4" width="9" height="3" fill="#1a6ee0"/><rect x="0" y="4" width="9" height="1" fill="#7ab4f5"/><path d="M9 0.5H13M9 11.5H13M11 0.5V11.5" stroke="#505050" stroke-width="1" fill="none"/><path d="M13.5 3V9" stroke="#9a9a9a" stroke-width="0.8"/></svg><div class="rt">Низкий уровень датчика температуры P0117</div><div class="rv">136</div></div><div class="row" style="top:194.00px"><div class="c1"></div><div class="c2"></div><svg class="a" style="left:6px;top:3px" width="14" height="12" viewBox="0 0 14 12"><rect x="0" y="4" width="9" height="3" fill="#1a6ee0"/><rect x="0" y="4" width="9" height="1" fill="#7ab4f5"/><path d="M9 0.5H13M9 11.5H13M11 0.5V11.5" stroke="#505050" stroke-width="1" fill="none"/><path d="M13.5 3V9" stroke="#9a9a9a" stroke-width="0.8"/></svg><div class="rt">Ошибка ДПКВ "А" (Нет зуба) P0336</div><div class="rv">40</div></div><div class="row g" style="top:211.00px"><div class="c1"></div><div class="c2"></div><svg class="a" style="left:6px;top:3px" width="14" height="12" viewBox="0 0 14 12"><rect x="0" y="4" width="9" height="3" fill="#1a6ee0"/><rect x="0" y="4" width="9" height="1" fill="#7ab4f5"/><path d="M9 0.5H13M9 11.5H13M11 0.5V11.5" stroke="#505050" stroke-width="1" fill="none"/><path d="M13.5 3V9" stroke="#9a9a9a" stroke-width="0.8"/></svg><div class="rt">Низкий уровень или замыкание на массу ДПКВ P0337</div><div class="rv">136</div></div><div class="row" style="top:228.00px"><div class="c1"></div><div class="c2"></div><svg class="a" style="left:6px;top:3px" width="14" height="12" viewBox="0 0 14 12"><rect x="0" y="4" width="9" height="3" fill="#1a6ee0"/><rect x="0" y="4" width="9" height="1" fill="#7ab4f5"/><path d="M9 0.5H13M9 11.5H13M11 0.5V11.5" stroke="#505050" stroke-width="1" fill="none"/><path d="M13.5 3V9" stroke="#9a9a9a" stroke-width="0.8"/></svg><div class="rt">Неэфективность EGR (неверный отклик) P0401</div><div class="rv">16</div></div><div class="row g" style="top:245.00px"><div class="c1"></div><div class="c2"></div><svg class="a" style="left:6px;top:3px" width="14" height="12" viewBox="0 0 14 12"><rect x="0" y="4" width="9" height="3" fill="#1a6ee0"/><rect x="0" y="4" width="9" height="1" fill="#7ab4f5"/><path d="M9 0.5H13M9 11.5H13M11 0.5V11.5" stroke="#505050" stroke-width="1" fill="none"/><path d="M13.5 3V9" stroke="#9a9a9a" stroke-width="0.8"/></svg><div class="rt">Неверный сигнал EGR при пуске&nbsp; P0402</div><div class="rv">40</div></div><div class="row" style="top:262.00px"><div class="c1"></div><div class="c2"></div><svg class="a" style="left:6px;top:3px" width="14" height="12" viewBox="0 0 14 12"><rect x="0" y="4" width="9" height="3" fill="#1a6ee0"/><rect x="0" y="4" width="9" height="1" fill="#7ab4f5"/><path d="M9 0.5H13M9 11.5H13M11 0.5V11.5" stroke="#505050" stroke-width="1" fill="none"/><path d="M13.5 3V9" stroke="#9a9a9a" stroke-width="0.8"/></svg><div class="rt">Сигнал EGRвне диапазона P0404</div><div class="rv">40</div></div><div class="row g" style="top:279.00px"><div class="c1"></div><div class="c2"></div><svg class="a" style="left:6px;top:3px" width="14" height="12" viewBox="0 0 14 12"><rect x="0" y="4" width="9" height="3" fill="#1a6ee0"/><rect x="0" y="4" width="9" height="1" fill="#7ab4f5"/><path d="M9 0.5H13M9 11.5H13M11 0.5V11.5" stroke="#505050" stroke-width="1" fill="none"/><path d="M13.5 3V9" stroke="#9a9a9a" stroke-width="0.8"/></svg><div class="rt">Высокий уровень сигнала EGR P0406</div><div class="rv">40</div></div><div class="row" style="top:296.00px"><div class="c1"></div><div class="c2"></div><svg class="a" style="left:6px;top:3px" width="14" height="12" viewBox="0 0 14 12"><rect x="0" y="4" width="9" height="3" fill="#1a6ee0"/><rect x="0" y="4" width="9" height="1" fill="#7ab4f5"/><path d="M9 0.5H13M9 11.5H13M11 0.5V11.5" stroke="#505050" stroke-width="1" fill="none"/><path d="M13.5 3V9" stroke="#9a9a9a" stroke-width="0.8"/></svg><div class="rt">&nbsp;Низкий уровень сигнала EGR P0405</div><div class="rv">40</div></div><div class="row g" style="top:313.00px"><div class="c1"></div><div class="c2"></div><svg class="a" style="left:6px;top:3px" width="14" height="12" viewBox="0 0 14 12"><rect x="0" y="4" width="9" height="3" fill="#1a6ee0"/><rect x="0" y="4" width="9" height="1" fill="#7ab4f5"/><path d="M9 0.5H13M9 11.5H13M11 0.5V11.5" stroke="#505050" stroke-width="1" fill="none"/><path d="M13.5 3V9" stroke="#9a9a9a" stroke-width="0.8"/></svg><div class="rt">Неисправность катушки зажигания 1 P0351</div><div class="rv">136</div></div><div class="row" style="top:330.00px"><div class="c1"></div><div class="c2"></div><svg class="a" style="left:6px;top:3px" width="14" height="12" viewBox="0 0 14 12"><rect x="0" y="4" width="9" height="3" fill="#1a6ee0"/><rect x="0" y="4" width="9" height="1" fill="#7ab4f5"/><path d="M9 0.5H13M9 11.5H13M11 0.5V11.5" stroke="#505050" stroke-width="1" fill="none"/><path d="M13.5 3V9" stroke="#9a9a9a" stroke-width="0.8"/></svg><div class="rt">Неисправность катушки зажигания 2 P0352</div><div class="rv">136</div></div><div class="row g" style="top:347.00px"><div class="c1"></div><div class="c2"></div><svg class="a" style="left:6px;top:3px" width="14" height="12" viewBox="0 0 14 12"><rect x="0" y="4" width="9" height="3" fill="#1a6ee0"/><rect x="0" y="4" width="9" height="1" fill="#7ab4f5"/><path d="M9 0.5H13M9 11.5H13M11 0.5V11.5" stroke="#505050" stroke-width="1" fill="none"/><path d="M13.5 3V9" stroke="#9a9a9a" stroke-width="0.8"/></svg><div class="rt">Неисправность катушки зажигания 3 P0353</div><div class="rv">0</div></div><div class="row" style="top:364.00px"><div class="c1"></div><div class="c2"></div><svg class="a" style="left:6px;top:3px" width="14" height="12" viewBox="0 0 14 12"><rect x="0" y="4" width="9" height="3" fill="#1a6ee0"/><rect x="0" y="4" width="9" height="1" fill="#7ab4f5"/><path d="M9 0.5H13M9 11.5H13M11 0.5V11.5" stroke="#505050" stroke-width="1" fill="none"/><path d="M13.5 3V9" stroke="#9a9a9a" stroke-width="0.8"/></svg><div class="rt">Неисправность катушки зажигания 4 P0354</div><div class="rv">0</div></div><div class="row g" style="top:381.00px"><div class="c1"></div><div class="c2"></div><svg class="a" style="left:6px;top:3px" width="14" height="12" viewBox="0 0 14 12"><rect x="0" y="4" width="9" height="3" fill="#1a6ee0"/><rect x="0" y="4" width="9" height="1" fill="#7ab4f5"/><path d="M9 0.5H13M9 11.5H13M11 0.5V11.5" stroke="#505050" stroke-width="1" fill="none"/><path d="M13.5 3V9" stroke="#9a9a9a" stroke-width="0.8"/></svg><div class="rt">Абсорбер большие утечки P0440</div><div class="rv">0</div></div><div class="row" style="top:397.00px"><div class="c1"></div><div class="c2"></div><svg class="a" style="left:6px;top:3px" width="14" height="12" viewBox="0 0 14 12"><rect x="0" y="4" width="9" height="3" fill="#1a6ee0"/><rect x="0" y="4" width="9" height="1" fill="#7ab4f5"/><path d="M9 0.5H13M9 11.5H13M11 0.5V11.5" stroke="#505050" stroke-width="1" fill="none"/><path d="M13.5 3V9" stroke="#9a9a9a" stroke-width="0.8"/></svg><div class="rt">Абсорбер малые утечки&nbsp; P0442</div><div class="rv">0</div></div><div class="row g" style="top:414.00px"><div class="c1"></div><div class="c2"></div><svg class="a" style="left:6px;top:3px" width="14" height="12" viewBox="0 0 14 12"><rect x="0" y="4" width="9" height="3" fill="#1a6ee0"/><rect x="0" y="4" width="9" height="1" fill="#7ab4f5"/><path d="M9 0.5H13M9 11.5H13M11 0.5V11.5" stroke="#505050" stroke-width="1" fill="none"/><path d="M13.5 3V9" stroke="#9a9a9a" stroke-width="0.8"/></svg><div class="rt">Абсорбер сверхмалые утечки P0456</div><div class="rv">0</div></div><div class="row" style="top:431.00px"><div class="c1"></div><div class="c2"></div><svg class="a" style="left:6px;top:3px" width="14" height="12" viewBox="0 0 14 12"><rect x="0" y="4" width="9" height="3" fill="#1a6ee0"/><rect x="0" y="4" width="9" height="1" fill="#7ab4f5"/><path d="M9 0.5H13M9 11.5H13M11 0.5V11.5" stroke="#505050" stroke-width="1" fill="none"/><path d="M13.5 3V9" stroke="#9a9a9a" stroke-width="0.8"/></svg><div class="rt">Неисправность клапана абсорбера P0446</div><div class="rv">0</div></div><div class="row g" style="top:448.00px"><div class="c1"></div><div class="c2"></div><svg class="a" style="left:6px;top:3px" width="14" height="12" viewBox="0 0 14 12"><rect x="0" y="4" width="9" height="3" fill="#1a6ee0"/><rect x="0" y="4" width="9" height="1" fill="#7ab4f5"/><path d="M9 0.5H13M9 11.5H13M11 0.5V11.5" stroke="#505050" stroke-width="1" fill="none"/><path d="M13.5 3V9" stroke="#9a9a9a" stroke-width="0.8"/></svg><div class="rt">Ошибка контрольной суммы P0601</div><div class="rv">136</div></div><div class="row" style="top:465.00px"><div class="c1"></div><div class="c2"></div><svg class="a" style="left:6px;top:3px" width="14" height="12" viewBox="0 0 14 12"><rect x="0" y="4" width="9" height="3" fill="#1a6ee0"/><rect x="0" y="4" width="9" height="1" fill="#7ab4f5"/><path d="M9 0.5H13M9 11.5H13M11 0.5V11.5" stroke="#505050" stroke-width="1" fill="none"/><path d="M13.5 3V9" stroke="#9a9a9a" stroke-width="0.8"/></svg><div class="rt">Неисправность датчика уровня топлива P0461</div><div class="rv">16</div></div><div class="row g" style="top:482.00px"><div class="c1"></div><div class="c2"></div><svg class="a" style="left:6px;top:3px" width="14" height="12" viewBox="0 0 14 12"><rect x="0" y="4" width="9" height="3" fill="#1a6ee0"/><rect x="0" y="4" width="9" height="1" fill="#7ab4f5"/><path d="M9 0.5H13M9 11.5H13M11 0.5V11.5" stroke="#505050" stroke-width="1" fill="none"/><path d="M13.5 3V9" stroke="#9a9a9a" stroke-width="0.8"/></svg><div class="rt">Непостоянная неисправность датчика уровня топлива P0464</div><div class="rv">0</div></div>
<div class="a hdr" style="left:1px;top:1px;width:387px;height:23px"><div class="a hsep" style="left:341px"></div><div class="a ht" style="left:5px;top:6px">Название параметра</div><div class="a ht" style="left:347px;top:6px;width:40px;overflow:hidden">Значени</div></div>
<div class="a vsb" style="left:388px;top:1px;height:491px"></div><svg class="a" style="left:393px;top:8px" width="7" height="5" viewBox="0 0 7 5"><path d="M0.5 4L3.5 0.5L6.5 4Z" fill="#404040"/></svg><div class="a thumbv" style="left:389px;top:19px;height:184px"><div class="gripv"></div></div><svg class="a" style="left:393px;top:481px" width="7" height="5" viewBox="0 0 7 5"><path d="M0.5 0.5H6.5L3.5 4Z" fill="#404040"/></svg>
<div class="a hsb" style="left:1px;top:492px;width:387px"></div><svg class="a" style="left:7px;top:495px" width="5" height="8" viewBox="0 0 5 8"><path d="M4 0.5V7.5L0.5 4Z" fill="#404040"/><path d="M4 2V6" stroke="#9a9a9a" stroke-width="0.6"/></svg><div class="a thumbh" style="left:19px;top:492px;width:93px"><div class="grip"></div></div><svg class="a" style="left:377px;top:496px" width="5" height="8" viewBox="0 0 5 8"><path d="M0.5 0.5V7.5L4 4Z" fill="#404040"/><path d="M0.5 2V6" stroke="#9a9a9a" stroke-width="0.6"/></svg><div class="a corner" style="left:388px;top:492px"></div>
</div>
</body></html>
